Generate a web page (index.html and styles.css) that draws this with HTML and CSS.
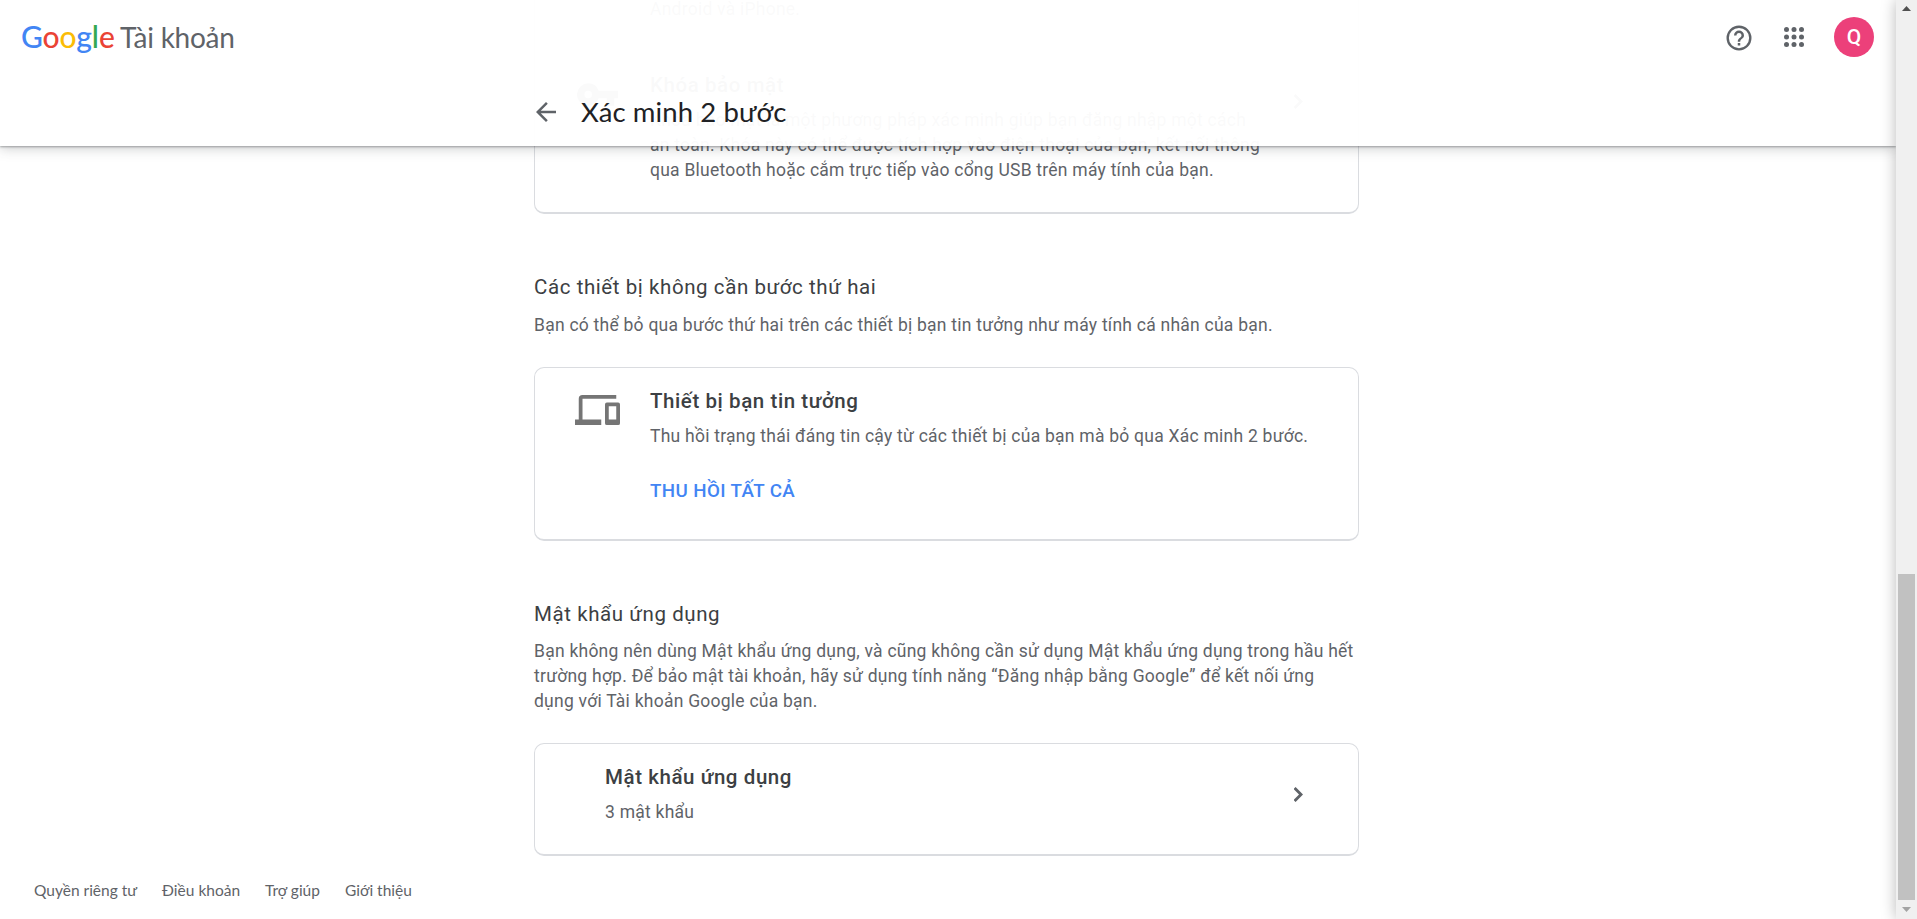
FILE: index.html
```html
<!DOCTYPE html>
<html lang="vi">
<head>
<meta charset="utf-8">
<title>Xác minh 2 bước</title>
<link rel="stylesheet" href="styles.css">
</head>
<body>
<div class="window">
  <div class="page">
    <header class="header">
      <div class="topbar">
        <div class="brand">
          <span class="logo"><span class="blue">G</span><span class="red">o</span><span class="yellow">o</span><span class="blue">g</span><span class="green">l</span><span class="red">e</span></span>
          <span class="product">Tài khoản</span>
        </div>
        <div class="actions">
          <svg class="help" viewBox="0 0 24 24"><path d="M12 2a10 10 0 1 0 0 20 10 10 0 0 0 0-20zm0 18.100a8.100 8.100 0 1 1 0-16.200 8.100 8.100 0 0 1 0 16.200zM11 16h2v2h-2zm1-10a4 4 0 0 0-4 4h2a2 2 0 1 1 4 0c0 2-3 1.800-3 5h2c0-2.250 3-2.500 3-5a4 4 0 0 0-4-4z"/></svg>
          <svg class="apps" viewBox="0 0 20 20"><circle cx="2.500" cy="2.500" r="2.500"/><circle cx="10" cy="2.500" r="2.500"/><circle cx="17.500" cy="2.500" r="2.500"/><circle cx="2.500" cy="10" r="2.500"/><circle cx="10" cy="10" r="2.500"/><circle cx="17.500" cy="10" r="2.500"/><circle cx="2.500" cy="17.500" r="2.500"/><circle cx="10" cy="17.500" r="2.500"/><circle cx="17.500" cy="17.500" r="2.500"/></svg>
          <div class="avatar">Q</div>
        </div>
      </div>
      <div class="titlebar">
        <svg class="back" viewBox="4 4 16 16"><path d="M20 11H7.830l5.590-5.590L12 4l-8 8 8 8 1.410-1.410L7.830 13H20v-2z"/></svg>
        <h1>Xác minh 2 bước</h1>
      </div>
    </header>

    <main class="content">
      <section class="card card-methods">
        <p class="method-end">Android và iPhone.</p>
        <div class="method">
          <svg class="key" viewBox="1 6 22 12"><path d="M12.650 10A6 6 0 0 0 7 6a6 6 0 1 0 5.650 8H17v4h4v-4h2v-4H12.650zM7 14a2 2 0 1 1 0-4 2 2 0 0 1 0 4z"/></svg>
          <div class="method-text">
            <h3>Khóa bảo mật</h3>
            <p>Khóa bảo mật là một phương pháp xác minh giúp bạn đăng nhập một cách<br>an toàn. Khóa này có thể được tích hợp vào điện thoại của bạn, kết nối thông<br>qua Bluetooth hoặc cắm trực tiếp vào cổng USB trên máy tính của bạn.</p>
          </div>
          <svg class="chevron" viewBox="8 5 8 14"><path d="M8 6.900 13.100 12 8 17.100l1.900 1.900 7-7-7-7z" transform="translate(-.6)"/></svg>
        </div>
      </section>

      <section class="group group-devices">
        <h2>Các thiết bị không cần bước thứ hai</h2>
        <p class="lead">Bạn có thể bỏ qua bước thứ hai trên các thiết bị bạn tin tưởng như máy tính cá nhân của bạn.</p>
        <div class="card card-devices">
          <svg class="devices" viewBox="0 4 24 16"><path d="M4 6h18V4H4a2 2 0 0 0-2 2v11H0v3h14v-3H4V6zm19 2h-6a1 1 0 0 0-1 1v10a1 1 0 0 0 1 1h6a1 1 0 0 0 1-1V9a1 1 0 0 0-1-1zm-1 9h-4v-7h4v7z"/></svg>
          <div class="device-text">
            <h3>Thiết bị bạn tin tưởng</h3>
            <p>Thu hồi trạng thái đáng tin cậy từ các thiết bị của bạn mà bỏ qua Xác minh 2 bước.</p>
            <a class="revoke">THU HỒI TẤT CẢ</a>
          </div>
        </div>
      </section>

      <section class="group group-passwords">
        <h2>Mật khẩu ứng dụng</h2>
        <p class="lead">Bạn không nên dùng Mật khẩu ứng dụng, và cũng không cần sử dụng Mật khẩu ứng dụng trong hầu hết<br>trường hợp. Để bảo mật tài khoản, hãy sử dụng tính năng “Đăng nhập bằng Google” để kết nối ứng<br>dụng với Tài khoản Google của bạn.</p>
        <div class="card card-passwords">
          <div class="password-text">
            <h3>Mật khẩu ứng dụng</h3>
            <p>3 mật khẩu</p>
          </div>
          <svg class="chevron" viewBox="8 5 8 14"><path d="M8 6.900 13.100 12 8 17.100l1.900 1.900 7-7-7-7z" transform="translate(-.6)"/></svg>
        </div>
      </section>
    </main>

    <footer class="footer">
      <a>Quyền riêng tư</a><a>Điều khoản</a><a>Trợ giúp</a><a>Giới thiệu</a>
    </footer>
  </div>
  <div class="scrollbar">
    <svg class="arrow-up" viewBox="0 0 9 5"><path d="M0 5 4.500 0 9 5z"/></svg>
    <div class="thumb"></div>
    <svg class="arrow-down" viewBox="0 0 9 5"><path d="M0 0h9L4.500 5z"/></svg>
  </div>
</div>
</body>
</html>
```

FILE: styles.css
```css
* { box-sizing: border-box; }
body, h1, h2, h3, p { margin: 0; }
body {
  font-family: Roboto, "Noto Sans", sans-serif;
  color: #5f6368;
  background: #fff;
  overflow: hidden;
}
svg { display: block; flex: none; fill: #5f6368; }

.window { display: flex; height: 919px; overflow: hidden; }
.page {
  position: relative;
  flex: 1;
  display: flex;
  flex-direction: column;
  overflow: hidden;
}

/* Header, laid over the scrolled content */
.header {
  position: absolute;
  top: 0;
  left: 0;
  right: 0;
  height: 146px;
  background: rgba(255, 255, 255, .97);
  box-shadow: 0 1px 2px rgba(60, 64, 67, .42), 0 2px 12px rgba(60, 64, 67, .28);
}
.topbar {
  display: flex;
  justify-content: space-between;
  align-items: center;
  height: 74px;
  padding: 0 22px 0 21px;
}
.brand { display: flex; align-items: baseline; padding-bottom: 3px; font-family: Lato, sans-serif; }
.logo { width: 99px; font-size: 30px; font-weight: 500; line-height: 40px; letter-spacing: -.15px; }
.blue { color: #4285f4; }
.red { color: #ea4335; }
.yellow { color: #fbbc05; }
.green { color: #34a853; }
.product { font-size: 28px; letter-spacing: -.25px; }
.actions { display: flex; align-items: center; }
.help { width: 30px; height: 30px; margin-right: 30px; margin-top: 2px; }
.apps { width: 20px; height: 20px; margin-right: 30px; }
.avatar {
  width: 40px;
  height: 40px;
  border-radius: 50%;
  background: #ec407a;
  color: #fff;
  font-size: 21px;
  font-weight: 500;
  line-height: 40px;
  text-align: center;
}
.titlebar { display: flex; align-items: center; height: 76px; padding-left: 536px; }
.back { width: 20px; height: 20px; }
h1 {
  margin-left: 25px;
  padding-bottom: 2px;
  font-family: Lato, sans-serif;
  font-size: 27.5px;
  font-weight: 400;
  line-height: 35px;
  letter-spacing: .1px;
  color: #202124;
}

/* Content column */
.content { flex: 1; width: 825px; margin-left: 534px; }
p { font-size: 17.5px; line-height: 25px; letter-spacing: .24px; white-space: nowrap; }
h2, h3 { font-size: 20.5px; line-height: 25px; color: #3c4043; letter-spacing: .58px; }
h2 { font-weight: 400; }
h3 { font-weight: 500; }
.card {
  display: flex;
  border: 1px solid #dadce0;
  border-bottom-width: 2px;
  border-radius: 10px;
}
.card-methods {
  flex-direction: column;
  height: 214px;
  border-top: 0;
  border-radius: 0 0 10px 10px;
}
.method-end { margin: -3px 0 0 115px; }
.method { display: flex; padding: 51px 50px 0 42px; }
.key { width: 41px; height: 23px; margin-top: 10px; }
.method-text { width: 600px; margin-left: 32px; }
.method-text p { margin-top: 10px; }
.chevron { width: 9px; height: 15px; }
.method .chevron { margin: 21px 0 0 44px; }

.group { display: flex; flex-direction: column; }
.group-devices { padding-top: 61px; }
.lead { margin-top: 13px; }
.card-devices { height: 174px; margin-top: 29px; padding: 21px 0 0 40px; }
.devices { width: 45px; height: 30px; margin-top: 6px; fill: #757575; }
.device-text { display: flex; flex-direction: column; margin-left: 30px; }
.device-text p { margin-top: 10px; }
.revoke {
  margin-top: 30px;
  font-size: 18.75px;
  font-weight: 500;
  line-height: 25px;
  letter-spacing: .4px;
  color: #4285f4;
}

.group-passwords { padding-top: 61px; }
.group-passwords .lead { margin-top: 12px; }
.card-passwords { height: 113px; margin-top: 29px; padding: 21px 55px 0 70px; justify-content: space-between; }
.password-text p { margin-top: 10px; }
.card-passwords .chevron { margin-top: 22px; }

.footer {
  display: flex;
  gap: 25px;
  height: 41px;
  padding-left: 34px;
  font-family: Lato, sans-serif;
  font-size: 15.5px;
  line-height: 24px;
}

/* Window scrollbar and the shade at its edge */
.scrollbar {
  display: flex;
  flex-direction: column;
  align-items: center;
  width: 21px;
  padding: 6px 0;
  background: #f0f0f0;
  box-shadow: 0 0 15px rgba(0, 0, 0, .28);
  z-index: 1;
}
.arrow-up { width: 9px; height: 5px; fill: #505050; }
.thumb { width: 17px; height: 326px; margin-top: 563px; background: #c1c1c1; }
.arrow-down { width: 9px; height: 5px; margin-top: 7px; fill: #a3a3a3; }
```
